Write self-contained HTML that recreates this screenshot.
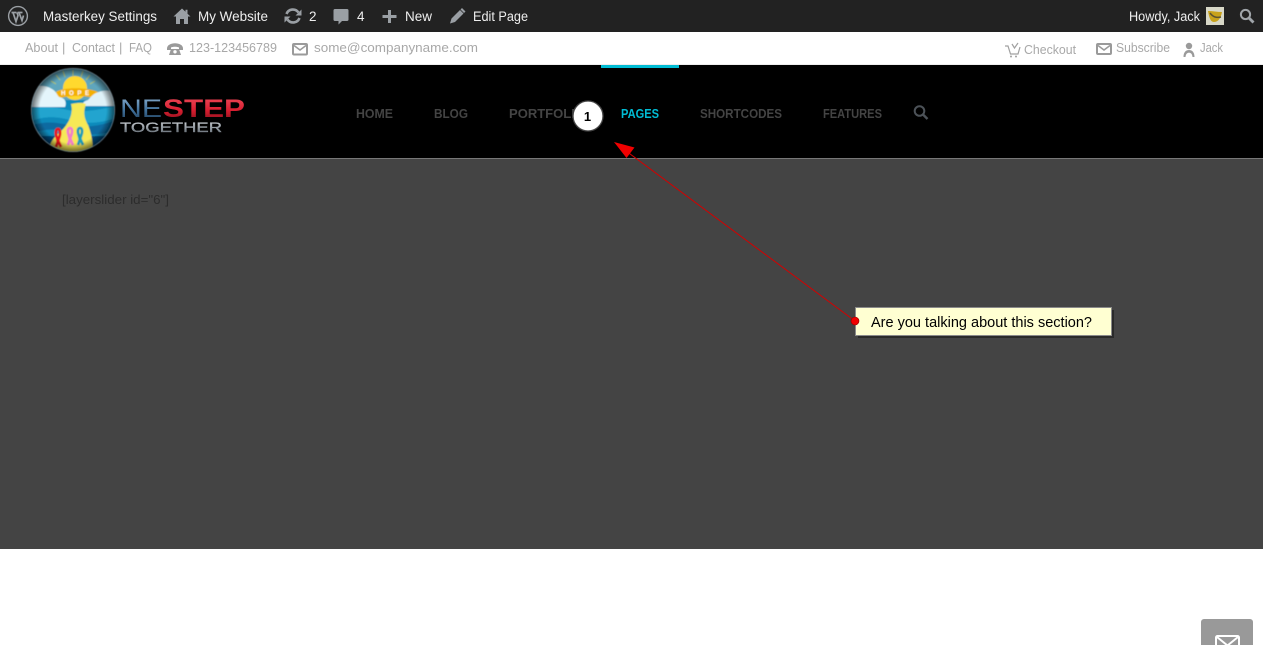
<!DOCTYPE html>
<html lang="en">
<head>
<meta charset="utf-8">
<title>One Step Together</title>
<style>
html,body{margin:0;padding:0;width:1263px;height:645px;overflow:hidden;background:#fff}
svg{display:block;position:absolute;left:0;top:0}
text{font-family:"Liberation Sans",Arial,sans-serif}
.ab{font-size:13.5px;fill:#eee}
.tb{font-size:13px;fill:#a8a8a8}
.nv{font-size:13px;font-weight:bold;fill:#444}
.ic{fill:#9a9a9a}
</style>
</head>
<body>
<svg width="1263" height="645" viewBox="0 0 1263 645" xmlns="http://www.w3.org/2000/svg">
<defs>
<linearGradient id="ne" x1="0" y1="0" x2="0" y2="1"><stop offset="0" stop-color="#8fb4d4"/><stop offset=".55" stop-color="#3f6f9a"/><stop offset="1" stop-color="#1d3a55"/></linearGradient>
<linearGradient id="st" x1="0" y1="0" x2="0" y2="1"><stop offset="0" stop-color="#ee4c5c"/><stop offset=".55" stop-color="#d81f30"/><stop offset="1" stop-color="#7d0f1a"/></linearGradient>
<linearGradient id="tg" x1="0" y1="0" x2="0" y2="1"><stop offset="0" stop-color="#e4e4e4"/><stop offset=".6" stop-color="#8e969e"/><stop offset="1" stop-color="#3d4650"/></linearGradient>
<radialGradient id="vg" cx=".5" cy=".5" r=".5"><stop offset=".8" stop-color="#000" stop-opacity="0"/><stop offset="1" stop-color="#000" stop-opacity=".55"/></radialGradient>
<clipPath id="lc"><circle cx="73" cy="110" r="41.500"/></clipPath>
<filter id="bl" x="-5%" y="-5%" width="110%" height="110%"><feGaussianBlur stdDeviation=".6"/></filter>
<filter id="bt" x="-5%" y="-20%" width="110%" height="140%"><feGaussianBlur stdDeviation=".35"/></filter>
</defs>

<!-- backgrounds -->
<rect x="0" y="0" width="1263" height="32" fill="#222"/>
<rect x="0" y="32" width="1263" height="32" fill="#fff"/>
<rect x="0" y="64" width="1263" height="1" fill="#eee"/>
<rect x="0" y="65" width="1263" height="93" fill="#000"/>
<rect x="0" y="158" width="1263" height="1" fill="#777"/>
<rect x="0" y="159" width="1263" height="390" fill="#444"/>

<!-- admin bar icons -->
<g fill="none" stroke="#9a9fa4">
<circle cx="18" cy="16" r="9.400" stroke-width="1.400"/>
<path d="M11.500 12.500h5M13 12.500l3 9 2-6-1-3M17.500 12.500h5M19 12.500l3 8 1.500-5" stroke-width="1.700"/>
</g>
<path d="M182 8.500l-8.500 8h2.500v7.500h4v-5h4v5h4v-7.500h2.500l-3-2.800v-4h-2v2.100z" fill="#9a9fa4"/>
<g fill="none" stroke="#9a9fa4" stroke-width="2.600">
<path d="M286.500 14a6.800 6.800 0 0 1 12-1.500"/>
<path d="M299.500 18a6.800 6.800 0 0 1-12 1.500"/>
</g>
<path d="M301.500 9.500v6h-6zM284.500 22.500v-6h6z" fill="#9a9fa4"/>
<path d="M335 9h12a1.500 1.500 0 0 1 1.500 1.500v9a1.500 1.500 0 0 1-1.500 1.500h-5l-3.500 3.500v-3.500h-3.500a1.500 1.500 0 0 1-1.500-1.500v-9a1.500 1.500 0 0 1 1.500-1.500z" fill="#9a9fa4"/>
<path d="M388 10h3v5h5.500v3h-5.500v5h-3v-5h-5.500v-3h5.500z" fill="#9a9fa4"/>
<path d="M450 23.500l1.500-5 8.500-8.500 3.500 3.500-8.500 8.500zM460.500 9.500l1.500-1.500 3.500 3.500-1.500 1.500z" fill="#9a9fa4"/>
<!-- admin bar text -->
<text class="ab" x="43" y="21" textLength="114" lengthAdjust="spacingAndGlyphs">Masterkey Settings</text>
<text class="ab" x="198" y="21" textLength="70" lengthAdjust="spacingAndGlyphs">My Website</text>
<text class="ab" x="309" y="21">2</text>
<text class="ab" x="357" y="21">4</text>
<text class="ab" x="405" y="21" textLength="27" lengthAdjust="spacingAndGlyphs">New</text>
<text class="ab" x="473" y="21" textLength="55" lengthAdjust="spacingAndGlyphs">Edit Page</text>
<text class="ab" x="1129" y="21" textLength="71" lengthAdjust="spacingAndGlyphs">Howdy, Jack</text>
<!-- avatar -->
<rect x="1206" y="7" width="18" height="18" fill="#d8d8c8"/>
<path d="M1208 11c5 0 9 1 14 1-1 5-3 10-8 10-4 0-5-6-6-11z" fill="#c9a21a"/>
<path d="M1210 13c3 4 6 5 11 4" fill="none" stroke="#5b5230" stroke-width="1.500"/>
<circle cx="1245.500" cy="14.500" r="4.600" fill="none" stroke="#a0a5aa" stroke-width="2"/>
<path d="M1249 18l4.500 4.500" stroke="#a0a5aa" stroke-width="2.800" fill="none"/>

<!-- top bar left -->
<text class="tb" x="25" y="52" textLength="33" lengthAdjust="spacingAndGlyphs">About</text>
<text class="tb" x="62" y="52">|</text>
<text class="tb" x="72" y="52" textLength="43" lengthAdjust="spacingAndGlyphs">Contact</text>
<text class="tb" x="119" y="52">|</text>
<text class="tb" x="129" y="52" textLength="23" lengthAdjust="spacingAndGlyphs">FAQ</text>
<path d="M167 48.500c0-7 16-7 16 0v1.500h-4v-2.500c-2-1-6-1-8 0v2.500h-4z" class="ic"/>
<path d="M171 49h8l2 6h-12z" class="ic"/>
<circle cx="175" cy="51.800" r="1.700" fill="#fff"/>
<text class="tb" x="189" y="52" textLength="88" lengthAdjust="spacingAndGlyphs">123-123456789</text>
<rect x="293" y="44" width="14" height="10.500" rx="1" fill="none" stroke="#9a9a9a" stroke-width="2"/>
<path d="M294 45.500l6 4.500 6-4.500" fill="none" stroke="#9a9a9a" stroke-width="1.500"/>
<text class="tb" x="314" y="52" textLength="164" lengthAdjust="spacingAndGlyphs">some@companyname.com</text>

<!-- top bar right -->
<path d="M1005 46h3l2.500 8h7.500l2-7" fill="none" stroke="#a0a0a0" stroke-width="1.200"/>
<path d="M1012 44l2.500 4 3.500-5" fill="none" stroke="#a0a0a0" stroke-width="1.200"/>
<circle cx="1011" cy="56.500" r="1" fill="#a0a0a0"/><circle cx="1016" cy="56.500" r="1" fill="#a0a0a0"/>
<text class="tb" x="1024" y="54" textLength="52" lengthAdjust="spacingAndGlyphs">Checkout</text>
<rect x="1097" y="44" width="14" height="10" rx="1" fill="none" stroke="#9a9a9a" stroke-width="2"/>
<path d="M1098 45.500l6 4.500 6-4.500" fill="none" stroke="#9a9a9a" stroke-width="1.500"/>
<text class="tb" x="1116" y="52" textLength="54" lengthAdjust="spacingAndGlyphs">Subscribe</text>
<circle cx="1189" cy="46" r="3.200" class="ic"/>
<path d="M1183.500 57c0-5 2.500-7 5.500-7s5.500 2 5.500 7h-2c-.3-3-1.500-4.300-3.500-4.300s-3.200 1.300-3.500 4.300z" class="ic"/>
<text class="tb" x="1200" y="52" textLength="23" lengthAdjust="spacingAndGlyphs">Jack</text>

<!-- logo badge -->
<g filter="url(#bl)">
<circle cx="73" cy="110" r="42" fill="#7d919b"/>
<g clip-path="url(#lc)">
<rect x="30" y="66" width="86" height="90" fill="#5fa6bd"/>
<g stroke="#b5c565" stroke-width="1"><path d="M60 80l-4-5M65 77l-2-6M73 76v-6M81 77l2-6M86 80l4-5M56 84l-5-3M90 84l5-3"/></g>
<circle cx="75" cy="88" r="12" fill="#ffd92e"/>
<path d="M56 92c6-5 32-5 42 0l-2 7c-8-4-30-4-38 0l-2-7z" fill="#f3b100"/>
<text x="61" y="95" font-size="6" font-weight="bold" fill="#fff" textLength="28" lengthAdjust="spacing">HOPE</text>
<rect x="30" y="100" width="86" height="56" fill="#0e8abb"/>
<path d="M30 88c8-3 16-3 22 1 4 2 5 6 7 8 6 1 8 5 6 10H30z" fill="#e4f5fb"/>
<path d="M116 92c-8-2-14-2-20 1-4 2-6 5-8 7-4 1-6 3-5 6h33z" fill="#dff2f8"/>
<path d="M30 108c14-2 26-1 38 2s30 0 48-4v12c-18 6-32 6-46 2s-28-4-40 2z" fill="#20a4cf"/>
<path d="M30 126c14-5 26-4 38-1s30 2 48-5v10c-18 6-32 6-46 2s-28-3-40 2z" fill="#0a6ba1"/>
<path d="M30 136h86v20H30z" fill="#07487a"/>
<path d="M71 104c5-1 11-2 15 0-3 8-2 14 2 21 3 7 5 16 5 28H48c1-10 6-16 12-21 8-7 14-18 11-28z" fill="#f6e956"/>
<g fill="none" stroke-width="2.800">
<path d="M58 142l-1-4c-2-5-1-9 1-9s3 4 1 9l-3 9M57 138l4 9" stroke="#e8141c"/>
<path d="M70 140l-1-4c-2-5-1-8 1-8s3 3 1 8l-3 9M69 136l4 9" stroke="#f27fc6"/>
<path d="M80 140l-1-4c-2-5-1-8 1-8s3 3 1 8l-3 9M79 136l4 9" stroke="#1f9fb6"/>
</g>
<circle cx="73" cy="110" r="41.500" fill="url(#vg)"/>
</g>
</g>
<!-- logo text -->
<g filter="url(#bt)">
<text x="120" y="117" font-size="25" fill="url(#ne)" textLength="42" lengthAdjust="spacingAndGlyphs">NE</text>
<text x="163" y="117" font-size="25" font-weight="bold" fill="url(#st)" textLength="82" lengthAdjust="spacingAndGlyphs">STEP</text>
<text x="120" y="132" font-size="14" fill="url(#tg)" stroke="#9aa2aa" stroke-width=".3" textLength="102" lengthAdjust="spacingAndGlyphs">TOGETHER</text>
</g>

<!-- nav -->
<rect x="601" y="65" width="78" height="3" fill="#00bcd4"/>
<text class="nv" x="356" y="118" textLength="37" lengthAdjust="spacingAndGlyphs">HOME</text>
<text class="nv" x="434" y="118" textLength="34" lengthAdjust="spacingAndGlyphs">BLOG</text>
<text class="nv" x="509" y="118" textLength="76" lengthAdjust="spacingAndGlyphs">PORTFOLIO</text>
<text class="nv" x="621" y="118" textLength="38" lengthAdjust="spacingAndGlyphs" style="fill:#00bcd4">PAGES</text>
<text class="nv" x="700" y="118" textLength="82" lengthAdjust="spacingAndGlyphs">SHORTCODES</text>
<text class="nv" x="823" y="118" textLength="59" lengthAdjust="spacingAndGlyphs">FEATURES</text>
<circle cx="919.500" cy="111" r="4.800" fill="none" stroke="#4c5258" stroke-width="2"/>
<path d="M923 114.500l4.500 4.500" stroke="#4c5258" stroke-width="2.400" fill="none"/>

<!-- placeholder -->
<text x="62" y="204" font-size="13" fill="#2c2c2c" textLength="107" lengthAdjust="spacingAndGlyphs">[layerslider id="6"]</text>

<!-- annotation -->
<path d="M855 321L622 148" stroke="#d40000" stroke-width="1" fill="none"/>
<path d="M614 142l20.500 5.500-8 10.500z" fill="#f00000"/>
<circle cx="588" cy="116" r="15" fill="#fff" stroke="#444" stroke-width="1.300"/>
<text x="587.500" y="121" font-size="13" font-weight="bold" fill="#000" text-anchor="middle">1</text>
<rect x="858" y="310" width="256" height="28" fill="#2a2a2a"/>
<rect x="855.500" y="307.500" width="256" height="28" fill="#ffffd2" stroke="#8a8a8a"/>
<text x="871" y="327" font-size="14.500" fill="#000" textLength="221" lengthAdjust="spacingAndGlyphs">Are you talking about this section?</text>
<circle cx="855" cy="321" r="4" fill="#f00000" stroke="#8a0000" stroke-width=".6"/>

<!-- floating contact button -->
<path d="M1201 645v-23a3 3 0 0 1 3-3h46a3 3 0 0 1 3 3v23z" fill="#999"/>
<rect x="1216" y="636" width="23" height="16" rx="1.500" fill="none" stroke="#fff" stroke-width="2"/>
<path d="M1217 637l10.500 8.500 10.500-8.500" fill="none" stroke="#fff" stroke-width="2"/>
</svg>
</body>
</html>
